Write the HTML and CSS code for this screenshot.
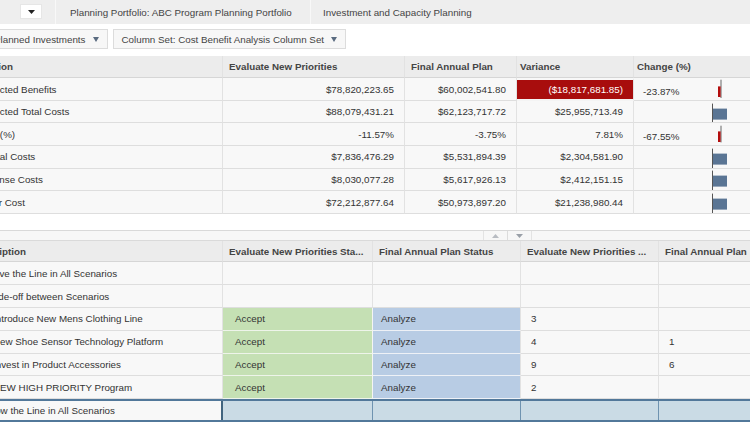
FILE: index.html
```html
<!DOCTYPE html>
<html>
<head>
<meta charset="utf-8">
<link rel="stylesheet" href="styles.css">
</head>
<body>
<div class="topbar">
  <div class="tb-menu"><span class="menu-btn"><svg width="7" height="4" viewBox="0 0 7 4"><path d="M0 0H7L3.5 4Z" fill="#222"/></svg></span></div>
  <div class="tb-item tb-portfolio">Planning Portfolio: ABC Program Planning Portfolio</div>
  <div class="tb-item tb-last">Investment and Capacity Planning</div>
</div>

<div class="toolbar">
  <div class="tool-btn">Planned Investments <svg width="6" height="5" viewBox="0 0 6 5"><path d="M0 0H6L3 5Z" fill="#5a6b80"/></svg></div>
  <div class="tool-btn">Column Set: Cost Benefit Analysis Column Set <svg width="6" height="5" viewBox="0 0 6 5"><path d="M0 0H6L3 5Z" fill="#5a6b80"/></svg></div>
</div>

<div class="grid upper">
  <div class="row head">
    <div class="cell c-desc">Description</div>
    <div class="cell">Evaluate New Priorities</div>
    <div class="cell">Final Annual Plan</div>
    <div class="cell tight">Variance</div>
    <div class="cell last tight">Change (%)</div>
  </div>
  <div class="row">
    <div class="cell c-label">Projected Benefits</div>
    <div class="cell num">$78,820,223.65</div>
    <div class="cell num">$60,002,541.80</div>
    <div class="cell num neg">($18,817,681.85)</div>
    <div class="cell last chg"><span class="chg-text">-23.87%</span><svg class="spark" width="40" height="22" viewBox="0 0 40 22"><rect x="17.5" y="1.7" width="1" height="18.3" fill="#666"/><rect x="15" y="8.4" width="2.6" height="10.6" fill="#b30d0d"/></svg></div>
  </div>
  <div class="row">
    <div class="cell c-label">Projected Total Costs</div>
    <div class="cell num">$88,079,431.21</div>
    <div class="cell num">$62,123,717.72</div>
    <div class="cell num">$25,955,713.49</div>
    <div class="cell last chg"><span class="chg-text"></span><svg class="spark" width="40" height="22" viewBox="0 0 40 22"><rect x="9" y="2.6" width="1" height="19.4" fill="#555"/><rect x="10" y="7.6" width="14" height="11" fill="#5a7594"/></svg></div>
  </div>
  <div class="row">
    <div class="cell c-label">NPV (%)</div>
    <div class="cell num">-11.57%</div>
    <div class="cell num">-3.75%</div>
    <div class="cell num">7.81%</div>
    <div class="cell last chg"><span class="chg-text">-67.55%</span><svg class="spark" width="40" height="22" viewBox="0 0 40 22"><rect x="17.5" y="2.7" width="1" height="16.7" fill="#666"/><rect x="15" y="8.4" width="2.6" height="10.6" fill="#b30d0d"/></svg></div>
  </div>
  <div class="row">
    <div class="cell c-label">Capital Costs</div>
    <div class="cell num">$7,836,476.29</div>
    <div class="cell num">$5,531,894.39</div>
    <div class="cell num">$2,304,581.90</div>
    <div class="cell last chg"><span class="chg-text"></span><svg class="spark" width="40" height="22" viewBox="0 0 40 22"><rect x="9" y="2.6" width="1" height="19.4" fill="#555"/><rect x="10" y="7.6" width="14" height="11" fill="#5a7594"/></svg></div>
  </div>
  <div class="row">
    <div class="cell c-label">Expense Costs</div>
    <div class="cell num">$8,030,077.28</div>
    <div class="cell num">$5,617,926.13</div>
    <div class="cell num">$2,412,151.15</div>
    <div class="cell last chg"><span class="chg-text"></span><svg class="spark" width="40" height="22" viewBox="0 0 40 22"><rect x="9" y="2.6" width="1" height="19.4" fill="#555"/><rect x="10" y="7.6" width="14" height="11" fill="#5a7594"/></svg></div>
  </div>
  <div class="row">
    <div class="cell c-label">Labor Cost</div>
    <div class="cell num">$72,212,877.64</div>
    <div class="cell num">$50,973,897.20</div>
    <div class="cell num">$21,238,980.44</div>
    <div class="cell last chg"><span class="chg-text"></span><svg class="spark" width="40" height="22" viewBox="0 0 40 22"><rect x="9" y="2.6" width="1" height="19.4" fill="#555"/><rect x="10" y="7.6" width="14" height="11" fill="#5a7594"/></svg></div>
  </div>
</div>

<div class="splitter">
  <div class="handle">
    <span class="h-btn"><svg width="7" height="4" viewBox="0 0 7 4"><path d="M0 4H7L3.5 0Z" fill="#b8bcc2"/></svg></span>
    <span class="h-btn"><svg width="7" height="4" viewBox="0 0 7 4"><path d="M0 0H7L3.5 4Z" fill="#9aa0a8"/></svg></span>
  </div>
</div>

<div class="grid lower">
  <div class="row head">
    <div class="cell c-desc2">Description</div>
    <div class="cell">Evaluate New Priorities Sta...</div>
    <div class="cell">Final Annual Plan Status</div>
    <div class="cell">Evaluate New Priorities ...</div>
    <div class="cell last">Final Annual Plan</div>
  </div>
  <div class="row">
    <div class="cell c-group">Above the Line in All Scenarios</div>
    <div class="cell"></div><div class="cell"></div><div class="cell"></div><div class="cell last"></div>
  </div>
  <div class="row">
    <div class="cell c-group2">Trade-off between Scenarios</div>
    <div class="cell"></div><div class="cell"></div><div class="cell"></div><div class="cell last"></div>
  </div>
  <div class="row">
    <div class="cell c-child">Introduce New Mens Clothing Line</div>
    <div class="cell accept">Accept</div>
    <div class="cell analyze">Analyze</div>
    <div class="cell count">3</div>
    <div class="cell last count"></div>
  </div>
  <div class="row">
    <div class="cell c-child">New Shoe Sensor Technology Platform</div>
    <div class="cell accept">Accept</div>
    <div class="cell analyze">Analyze</div>
    <div class="cell count">4</div>
    <div class="cell last count">1</div>
  </div>
  <div class="row">
    <div class="cell c-child">Invest in Product Accessories</div>
    <div class="cell accept">Accept</div>
    <div class="cell analyze">Analyze</div>
    <div class="cell count">9</div>
    <div class="cell last count">6</div>
  </div>
  <div class="row">
    <div class="cell c-child">NEW HIGH PRIORITY Program</div>
    <div class="cell accept">Accept</div>
    <div class="cell analyze">Analyze</div>
    <div class="cell count">2</div>
    <div class="cell last count"></div>
  </div>
  <div class="row selected">
    <div class="cell c-group sel-first">Below the Line in All Scenarios</div>
    <div class="cell"></div><div class="cell"></div><div class="cell"></div><div class="cell last"></div>
  </div>
</div>
</body>
</html>
```

FILE: styles.css
```css
* { box-sizing: border-box; }
html, body { margin: 0; padding: 0; }
body {
  width: 750px;
  height: 422px;
  overflow: hidden;
  background: #fff;
  font-family: "Liberation Sans", Arial, sans-serif;
  font-size: 9.8px;
  color: #333;
}

/* top bar */
.topbar {
  display: flex;
  height: 24px;
  background: #eeeeee;
  color: #444;
}
.tb-menu {
  width: 56px;
  display: flex;
  align-items: center;
  padding-left: 20px;
  border-right: 1px solid #f8f8f8;
}
.menu-btn {
  width: 22px;
  height: 15px;
  margin-top: -1px;
  background: #fff;
  border: 1px solid #e6e6e6;
  display: flex;
  align-items: center;
  justify-content: center;
}
.tb-item {
  display: flex;
  align-items: center;
  padding-left: 14px;
  white-space: nowrap;
}
.tb-portfolio {
  width: 255px;
  border-right: 1px solid #f8f8f8;
}
.tb-last { padding-left: 12px; }

/* toolbar */
.toolbar {
  display: flex;
  gap: 5px;
  height: 28px;
  padding-top: 5px;
  margin-left: -15px;
}
.tool-btn {
  display: flex;
  align-items: center;
  gap: 7px;
  height: 20px;
  padding: 0 8px 0 8px;
  background: #f7f7f7;
  border: 1px solid #dcdcdc;
  color: #444;
  white-space: nowrap;
}

/* grids */
.grid {
  margin-left: -48px;
  width: 900px;
}
.upper { margin-top: 4px; }
.upper .row {
  display: grid;
  grid-template-columns: 271px 182px 112px 117px 1fr;
  height: 22.6px;
}
.lower .row {
  display: grid;
  grid-template-columns: 271px 150px 148px 138px 1fr;
  height: 22.8px;
}
.row .cell {
  display: flex;
  align-items: center;
  padding: 0 6px;
  background: #f8f8f8;
  border-right: 1px solid #e2e2e2;
  border-bottom: 1px solid #dedede;
  white-space: nowrap;
  overflow: hidden;
}
.row .cell.last { border-right: none; }
.row.head .cell {
  background: #ececec;
  color: #444;
  font-weight: bold;
  border-bottom: 1px solid #d6d6d6;
  padding-left: 6px;
}
.row.head .cell.tight { padding-left: 3px; }
.upper .row.head { height: 22.3px; }
.lower .row.head { height: 22.5px; border-top: 1px solid #dadada; }
.row.head .c-desc { padding-left: 7px; }
.row.head .c-desc2 { padding-left: 20px; }

.c-label { padding-left: 25px !important; }
.num { justify-content: flex-end; padding-right: 10px !important; }
.neg {
  background: #a80d0d !important;
  color: #fff;
  border-top: 2px solid #f8f8f8;
  border-bottom: 2px solid #f4f4f4 !important;
}
.chg { padding-left: 9px !important; }
.chg-text { width: 60px; padding-top: 4px; }
.spark { display: block; }

/* splitter */
.splitter {
  margin-top: 16.5px;
  height: 9.5px;
  border-top: 1px solid #d9d9d9;
  background: #f7f7f7;
}
.handle {
  display: flex;
  margin-left: 483px;
  width: 49px;
  height: 8.5px;
  border-left: 1px solid #e3e3e3;
  border-right: 1px solid #e3e3e3;
}
.h-btn {
  flex: 1;
  display: flex;
  justify-content: center;
  align-items: center;
}
.h-btn + .h-btn { border-left: 1px solid #dcdcdc; }

/* lower table */
.c-group { padding-left: 30px !important; }
.c-group2 { padding-left: 32px !important; }
.c-child { padding-left: 41px !important; }
.accept {
  background: #c5e0b4 !important;
  padding-left: 12px !important;
  border-bottom: 1px solid #eef4ea !important;
  border-right: 1px solid #f4f4f4 !important;
}
.analyze {
  background: #b8cce4 !important;
  padding-left: 8px !important;
  border-bottom: 1px solid #eef1f6 !important;
}
.count { padding-left: 10px !important; }

.row.selected {
  border-top: 2px solid #52789a;
  border-bottom: 2px solid #52789a;
}
.row.selected .cell {
  background: #cadbe5;
  border-bottom: none;
  border-right: 1px solid #6f93b0;
}
.row.selected .sel-first {
  background: #f8f8f8;
  border-right: 2px solid #41647f;
  padding-left: 29px !important;
}
```
